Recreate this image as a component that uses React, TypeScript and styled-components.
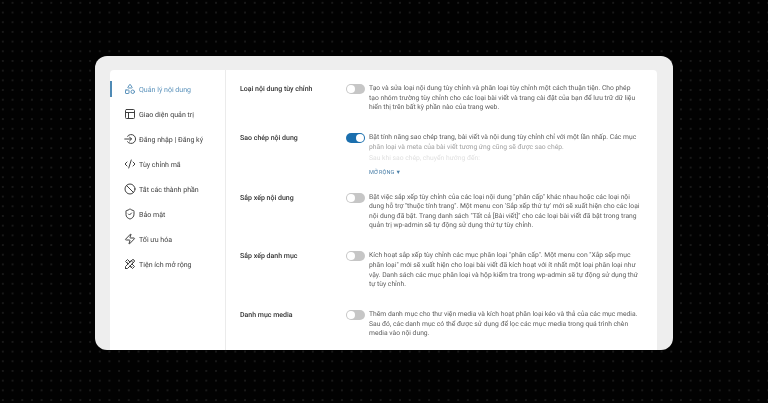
import React from "react";
import styled, { createGlobalStyle } from "styled-components";
import { Shapes, PanelsTopLeft, CodeXml, Ban, ShieldCheck, Zap } from "lucide-react";
import { TbTools } from "react-icons/tb";

const GlobalStyle = createGlobalStyle`
  html, body {
    margin: 0;
    padding: 0;
    background: #000;
  }
  * { box-sizing: border-box; }
`;

const Page = styled.div`
  width: 768px;
  height: 403px;
  overflow: hidden;
  padding: 56px 95px 53px;
  background-color: #020202;
  background-image: radial-gradient(circle at center, #1f1f1f 0, #1f1f1f 0.6px, transparent 1px);
  background-size: 9.7px 9.7px;
  background-position: -2px -2px;
  font-family: Roboto, "Noto Sans", sans-serif;
  text-rendering: geometricPrecision;
`;

const Frame = styled.div`
  height: 294px;
  padding: 14px 16px 0 15px;
  background: #eeeeee;
  border-radius: 12px;
  overflow: hidden;
  filter: blur(0.3px);
`;

const Panel = styled.div`
  height: 100%;
  display: flex;
  background: #fff;
  border-radius: 4px 4px 0 0;
  overflow: hidden;
`;

const Sidebar = styled.nav`
  width: 116px;
  flex: none;
  padding-top: 6.5px;
  border-right: 1px solid #ebebeb;
`;

const NavRow = styled.div<{ $active?: boolean }>`
  height: 25px;
  display: flex;
  align-items: center;
  gap: 3px;
  padding-left: 14px;
  font-size: 7.05px;
  color: ${(p) => (p.$active ? "#5b92bb" : "#404040")};
  position: relative;
  white-space: nowrap;

  ${(p) =>
    p.$active &&
    `&::before {
      content: "";
      position: absolute;
      left: 0;
      top: 4px;
      width: 2px;
      height: 16px;
      background: #4f8ab5;
    }`}

  svg {
    width: 12px;
    height: 12px;
    flex: none;
  }
`;

const Content = styled.main`
  flex: 1;
  padding: 14px 0 0 14px;
  display: flex;
  flex-direction: column;
  gap: 20.4px;
`;

const Row = styled.section<{ $height?: number }>`
  display: flex;
  align-items: flex-start;
  ${(p) => p.$height && `height: ${p.$height}px;`}
`;

const Label = styled.div`
  width: 105px;
  flex: none;
  font-size: 7px;
  font-weight: 500;
  line-height: 10px;
  color: #333;
  white-space: nowrap;
`;

const Toggle = styled.div<{ $on?: boolean }>`
  width: 19px;
  height: 10px;
  flex: none;
  margin: 0 4px 0 1px;
  padding: 1px;
  border-radius: 5px;
  display: flex;
  justify-content: ${(p) => (p.$on ? "flex-end" : "flex-start")};
  background: ${(p) => (p.$on ? "#1b6fae" : "#c6c6c6")};

  &::after {
    content: "";
    width: 8px;
    height: 8px;
    border-radius: 50%;
    background: #fff;
  }
`;

const Desc = styled.div`
  font-size: 6.75px;
  line-height: 9.6px;
  color: #5c5c5c;
  white-space: nowrap;
`;

const Faded = styled.div<{ $level: number }>`
  opacity: ${(p) => p.$level};
`;

const FadedGap = styled(Faded)`
  margin-top: 2px;
`;

const More = styled.div`
  margin-top: 4px;
  font-size: 5.6px;
  line-height: 10px;
  color: #4a7fa8;
`;

const LoginIcon = () => (
  <svg viewBox="0 0 24 24" fill="none" stroke="currentColor" strokeWidth="2" strokeLinecap="round" strokeLinejoin="round">
    <path d="M7 6.5A9 9 0 1 1 7 17.5" />
    <path d="M1.5 12H15" />
    <path d="M11 8l4 4-4 4" />
  </svg>
);

const navItems = [
  { icon: <Shapes />, text: "Quản lý nội dung", active: true },
  { icon: <PanelsTopLeft />, text: "Giao diện quản trị" },
  { icon: <LoginIcon />, text: "Đăng nhập | Đăng ký" },
  { icon: <CodeXml />, text: "Tùy chỉnh mã" },
  { icon: <Ban />, text: "Tắt các thành phần" },
  { icon: <ShieldCheck />, text: "Bảo mật" },
  { icon: <Zap />, text: "Tối ưu hóa" },
  { icon: <TbTools />, text: "Tiện ích mở rộng" },
];

const rows = [
  {
    label: "Loại nội dung tùy chỉnh",
    lines: [
      "Tạo và sửa loại nội dung tùy chỉnh và phân loại tùy chỉnh một cách thuận tiện. Cho phép",
      "tạo nhóm trường tùy chỉnh cho các loại bài viết và trang cài đặt của bạn để lưu trữ dữ liệu",
      "hiển thị trên bất kỳ phần nào của trang web.",
    ],
  },
  {
    label: "Sao chép nội dung",
    on: true,
    height: 39,
    lines: ["Bật tính năng sao chép trang, bài viết và nội dung tùy chỉnh chỉ với một lần nhấp. Các mục"],
    expandable: true,
  },
  {
    label: "Sắp xếp nội dung",
    lines: [
      "Bật việc sắp xếp tùy chỉnh của các loại nội dung \"phân cấp\" khác nhau hoặc các loại nội",
      "dung hỗ trợ \"thuộc tính trang\". Một menu con 'Sắp xếp thứ tự' mới sẽ xuất hiện cho các loại",
      "nội dung đã bật. Trang danh sách \"Tất cả [Bài viết]\" cho các loại bài viết đã bật trong trang",
      "quản trị wp-admin sẽ tự động sử dụng thứ tự tùy chỉnh.",
    ],
  },
  {
    label: "Sắp xếp danh mục",
    lines: [
      "Kích hoạt sắp xếp tùy chỉnh các mục phân loại \"phân cấp\". Một menu con \"Xắp sếp mục",
      "phân loại\" mới sẽ xuất hiện cho loại bài viết đã kích hoạt với ít nhất một loại phân loại như",
      "vậy. Danh sách các mục phân loại và hộp kiểm tra trong wp-admin sẽ tự động sử dụng thứ",
      "tự tùy chỉnh.",
    ],
  },
  {
    label: "Danh mục media",
    lines: [
      "Thêm danh mục cho thư viện media và kích hoạt phân loại kéo và thả của các mục media.",
      "Sau đó, các danh mục có thể được sử dụng để lọc các mục media trong quá trình chèn",
      "media vào nội dung.",
    ],
  },
];

export default function App() {
  return (
    <Page>
      <GlobalStyle />
      <Frame>
        <Panel>
          <Sidebar>
            {navItems.map((item) => (
              <NavRow key={item.text} $active={item.active}>
                {item.icon}
                <span>{item.text}</span>
              </NavRow>
            ))}
          </Sidebar>
          <Content>
            {rows.map((row) => (
              <Row key={row.label} $height={row.height}>
                <Label>{row.label}</Label>
                <Toggle $on={row.on} />
                <Desc>
                  {row.lines.map((line) => (
                    <div key={line}>{line}</div>
                  ))}
                  {row.expandable && (
                    <>
                      <Faded $level={0.6}>phân loại và meta của bài viết tương ứng cũng sẽ được sao chép.</Faded>
                      <FadedGap $level={0.2}>Sau khi sao chép, chuyển hướng đến:</FadedGap>
                      <More>MỞ RỘNG ▼</More>
                    </>
                  )}
                </Desc>
              </Row>
            ))}
          </Content>
        </Panel>
      </Frame>
    </Page>
  );
}
